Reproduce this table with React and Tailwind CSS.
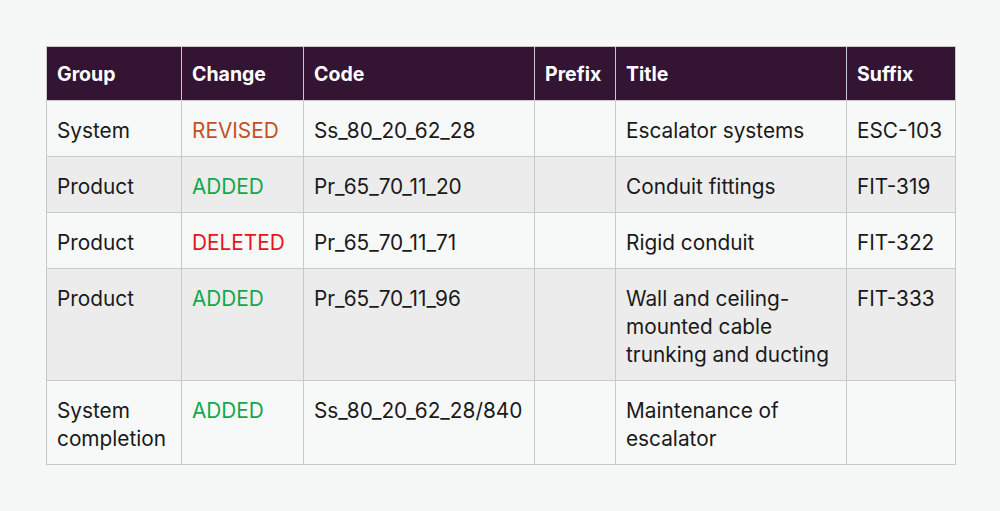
const rows = [
  { group: "System", change: "REVISED", code: "Ss_80_20_62_28", prefix: "", title: "Escalator systems", suffix: "ESC-103" },
  { group: "Product", change: "ADDED", code: "Pr_65_70_11_20", prefix: "", title: "Conduit fittings", suffix: "FIT-319" },
  { group: "Product", change: "DELETED", code: "Pr_65_70_11_71", prefix: "", title: "Rigid conduit", suffix: "FIT-322" },
  { group: "Product", change: "ADDED", code: "Pr_65_70_11_96", prefix: "", title: "Wall and ceiling-mounted cable trunking and ducting", suffix: "FIT-333" },
  { group: "System completion", change: "ADDED", code: "Ss_80_20_62_28/840", prefix: "", title: "Maintenance of escalator", suffix: "" },
];

const changeColor = {
  REVISED: "text-[#c4501f]",
  ADDED: "text-[#12a84a]",
  DELETED: "text-[#e6141a]",
};

const widths = ["w-[135px]", "w-[122px]", "w-[231px]", "w-[81px]", "w-[231px]", "w-[109px]"];
const headers = ["Group", "Change", "Code", "Prefix", "Title", "Suffix"];

const cell = "border border-[#c9c9c9] pl-[10px] pr-1 pt-[16px] pb-[11px] align-top";

function App() {
  return (
    <div className="w-[1000px] h-[511px] bg-[#f6f8f8] pt-[46px] pl-[46px] font-['Inter',sans-serif] text-[20.8px] leading-[28px] text-[#1a1a1a]">
      <table className="table-fixed border-collapse w-[909px]">
        <colgroup>
          {widths.map((w, i) => (
            <col key={i} className={w} />
          ))}
        </colgroup>
        <thead>
          <tr className="bg-[#331433] text-white">
            {headers.map((h) => (
              <th key={h} className="border border-[#c9c9c9] text-left font-bold text-[19.5px] pl-[10px] pr-1 pt-[13px] pb-[12px] align-top">
                {h}
              </th>
            ))}
          </tr>
        </thead>
        <tbody>
          {rows.map((r, i) => (
            <tr key={i} className={i % 2 === 0 ? "bg-[#f7f9f9]" : "bg-[#ececec]"}>
              <td className={cell}>{r.group}</td>
              <td className={cell + " " + changeColor[r.change]}>{r.change}</td>
              <td className={cell}>{r.code}</td>
              <td className={cell}>{r.prefix}</td>
              <td className={cell}>{r.title}</td>
              <td className={cell}>{r.suffix}</td>
            </tr>
          ))}
        </tbody>
      </table>
    </div>
  );
}

export default App;
